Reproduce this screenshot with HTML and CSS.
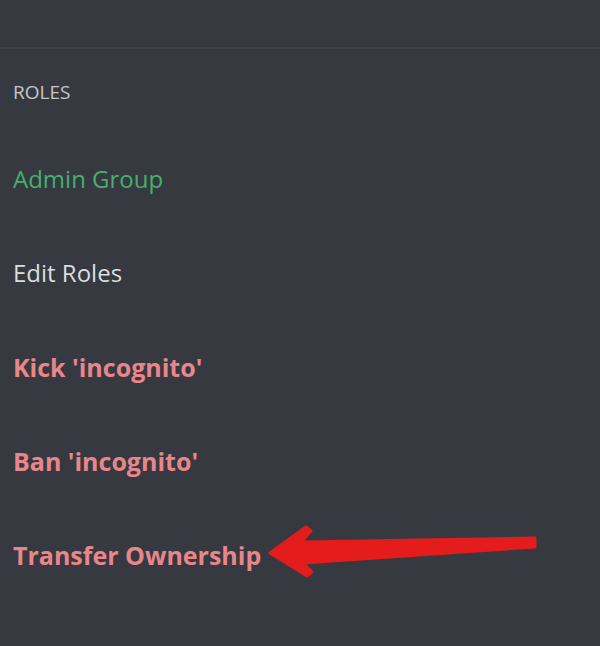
FILE: index.html
```html
<!DOCTYPE html>
<html lang="en">
<head>
    <meta charset="UTF-8">
    <meta name="viewport" content="width=device-width, initial-scale=1.0">
    <title>Member actions</title>
    <link rel="stylesheet" href="styles.css">
</head>
<body>
    <div class="top-bar"></div>

    <div class="section">
        <h2 class="section-title">Roles</h2>
        <ul class="menu">
            <li class="menu-item role">Admin Group</li>
            <li class="menu-item">Edit Roles</li>
            <li class="menu-item danger">Kick 'incognito'</li>
            <li class="menu-item danger">Ban 'incognito'</li>
            <li class="menu-item danger">Transfer Ownership</li>
        </ul>
    </div>

    <!-- annotation arrow drawn over the screenshot -->
    <svg class="arrow" viewBox="0 0 600 646" width="600" height="646">
        <polygon points="270,553 306,527 311,531 301,542 535,538 535,547 303,563 312,572 307,576"
                 fill="#e41c1c" stroke="#e41c1c" stroke-width="3" stroke-linejoin="round"/>
    </svg>
</body>
</html>
```

FILE: styles.css
```css
body {
    margin: 0;
    background-color: #36393f;
    font-family: 'Open Sans', 'Noto Sans', sans-serif;
    position: relative;
    height: 646px;
    overflow: hidden;
}
.top-bar {
    height: 47px;
    border-bottom: 2px solid #3f4248;
}
.section {
    padding: 31px 13px 0;
}
.section-title {
    margin: 0;
    font-size: 19px;
    line-height: 24px;
    font-weight: 400;
    text-transform: uppercase;
    color: #c4c6c9;
}
.menu {
    list-style: none;
    margin: 28px 0 0;
    padding: 0;
}
.menu-item {
    height: 94px;
    line-height: 94px;
    font-size: 24px;
    color: #dcddde;
}
.menu-item.role {
    color: #43b06e;
}
.menu-item.danger {
    color: #e8868c;
    font-size: 25px;
    font-weight: 700;
}
.arrow {
    position: absolute;
    top: 0;
    left: 0;
    pointer-events: none;
}
```
